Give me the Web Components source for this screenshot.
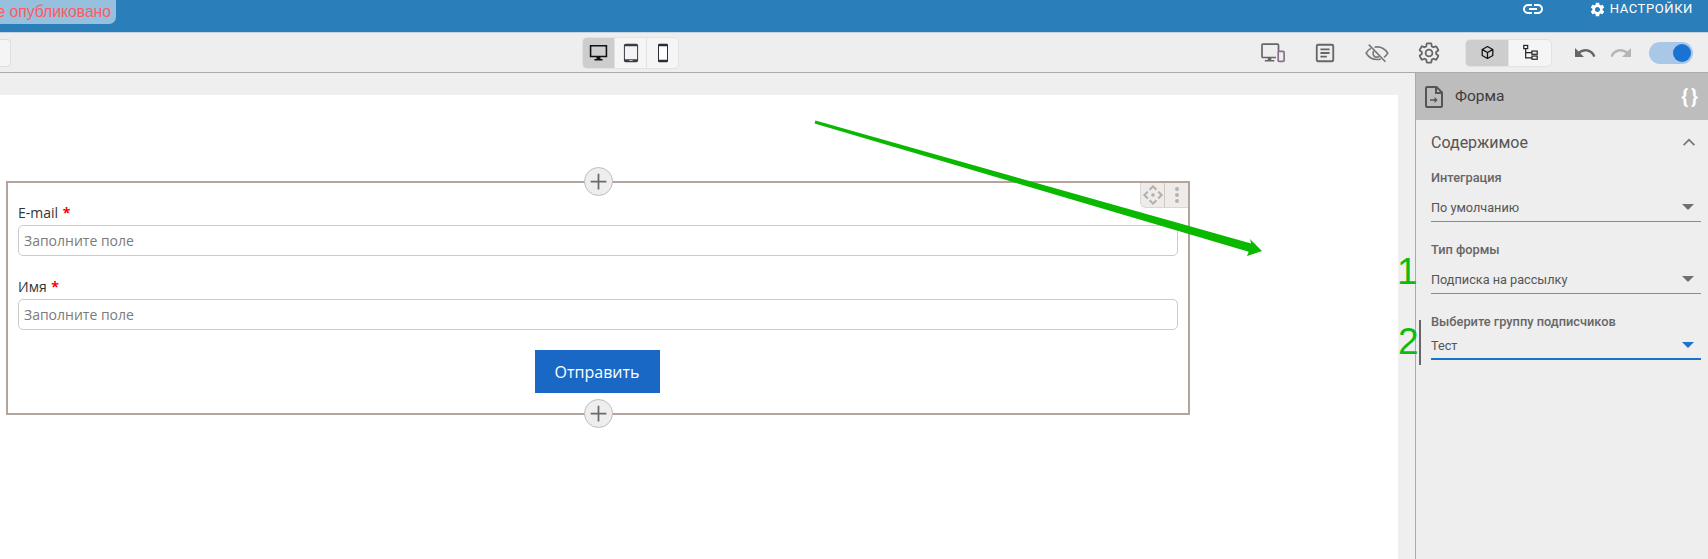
<!DOCTYPE html>
<html lang="ru">
<head>
<meta charset="utf-8">
<title>Форма</title>
<style>
  html, body { margin: 0; height: 100%; overflow: hidden; background: #eee; }
  body { font-family: Roboto, "Liberation Sans", sans-serif; }
</style>
</head>
<body>
<builder-app>
  <top-header slot="header"></top-header>
  <edit-toolbar slot="toolbar"></edit-toolbar>
  <form-canvas slot="canvas">
    <form-field label="E-mail"></form-field>
    <form-field label="Имя"></form-field>
    <submit-button>Отправить</submit-button>
  </form-canvas>
  <side-panel slot="panel">
    <field-select label="Интеграция" value="По умолчанию"></field-select>
    <field-select label="Тип формы" value="Подписка на рассылку"></field-select>
    <field-select label="Выберите группу подписчиков" value="Тест" active></field-select>
  </side-panel>
  <mock-annotations slot="overlay"></mock-annotations>
</builder-app>

<script>
const ICONS = {
  link: '<path fill="currentColor" d="M3.9 12c0-1.71 1.39-3.1 3.1-3.1h4V7H7c-2.76 0-5 2.24-5 5s2.24 5 5 5h4v-1.9H7c-1.71 0-3.1-1.39-3.1-3.1zM8 13h8v-2H8v2zm9-6h-4v1.9h4c1.71 0 3.1 1.39 3.1 3.1s-1.39 3.1-3.1 3.1h-4V17h4c2.76 0 5-2.24 5-5s-2.24-5-5-5z"/>',
  gear: '<path fill="currentColor" d="M19.14 12.94c.04-.3.06-.61.06-.94 0-.32-.02-.64-.07-.94l2.03-1.58c.18-.14.23-.41.12-.61l-1.92-3.32c-.12-.22-.37-.29-.59-.22l-2.39.96c-.5-.38-1.03-.7-1.62-.94l-.36-2.54c-.04-.24-.24-.41-.48-.41h-3.84c-.24 0-.43.17-.47.41l-.36 2.54c-.59.24-1.13.57-1.62.94l-2.39-.96c-.22-.08-.47 0-.59.22L2.74 8.87c-.12.21-.08.47.12.61l2.03 1.58c-.05.3-.09.63-.09.94s.02.64.07.94l-2.03 1.58c-.18.14-.23.41-.12.61l1.92 3.32c.12.22.37.29.59.22l2.39-.96c.5.38 1.03.7 1.62.94l.36 2.54c.05.24.24.41.48.41h3.84c.24 0 .44-.17.47-.41l.36-2.54c.59-.24 1.13-.56 1.62-.94l2.39.96c.22.08.47 0 .59-.22l1.92-3.32c.12-.22.07-.47-.12-.61l-2.01-1.58zM12 15.6c-1.98 0-3.6-1.62-3.6-3.6s1.62-3.6 3.6-3.6 3.6 1.62 3.6 3.6-1.62 3.6-3.6 3.6z"/>',
  gearOutline: '<path fill="none" stroke="currentColor" stroke-width="1.8" d="M19.14 12.94c.04-.3.06-.61.06-.94 0-.32-.02-.64-.07-.94l2.03-1.58c.18-.14.23-.41.12-.61l-1.92-3.32c-.12-.22-.37-.29-.59-.22l-2.39.96c-.5-.38-1.03-.7-1.62-.94l-.36-2.54c-.04-.24-.24-.41-.48-.41h-3.84c-.24 0-.43.17-.47.41l-.36 2.54c-.59.24-1.13.57-1.62.94l-2.39-.96c-.22-.08-.47 0-.59.22L2.74 8.87c-.12.21-.08.47.12.61l2.03 1.58c-.05.3-.09.63-.09.94s.02.64.07.94l-2.03 1.58c-.18.14-.23.41-.12.61l1.92 3.32c.12.22.37.29.59.22l2.39-.96c.5.38 1.03.7 1.62.94l.36 2.54c.05.24.24.41.48.41h3.84c.24 0 .44-.17.47-.41l.36-2.54c.59-.24 1.13-.56 1.62-.94l2.39.96c.22.08.47 0 .59-.22l1.92-3.32c.12-.22.07-.47-.12-.61l-2.01-1.58z"/><circle cx="12" cy="12" r="3.4" fill="none" stroke="currentColor" stroke-width="1.8"/>',
  undo: '<path fill="currentColor" d="M12.5 8c-2.65 0-5.05.99-6.9 2.6L2 7v9h9l-3.62-3.62c1.39-1.16 3.16-1.88 5.12-1.88 3.54 0 6.55 2.31 7.6 5.5l2.37-.78C21.08 11.03 17.15 8 12.5 8z"/>',
  redo: '<path fill="currentColor" d="M18.4 10.6C16.55 8.99 14.15 8 11.5 8c-4.65 0-8.58 3.03-9.96 7.22L3.9 16c1.05-3.19 4.05-5.5 7.6-5.5 1.95 0 3.73.72 5.12 1.88L13 16h9V7l-3.6 3.6z"/>',
  responsive: '<g fill="none" stroke="currentColor" stroke-width="1.7"><path d="M17.5 10.5V4.2q0-1-1-1H2q-1 0-1 1v11.3q0 1 1 1h13"/><rect x="17.2" y="10.4" width="5.9" height="10" rx=".8" stroke="#8a6f93"/></g><path fill="currentColor" d="M6.7 16.5h3.6v2.4h3v1.5H3.8v-1.5h2.9z"/>',
  article: '<path fill="none" stroke="currentColor" stroke-width="2" d="M4.5 3h15q1.5 0 1.5 1.5v15q0 1.5-1.5 1.5h-15Q3 21 3 19.5v-15Q3 3 4.5 3z"/><path fill="currentColor" d="M7 7h10v2H7zM7 11h10v2H7zM7 15h7v2H7z"/>',
  eyeOff: '<g fill="none" stroke="#777" stroke-width="1.6"><path d="M5.8 7.400Q3 9 1.200 12.200q4 6.300 10.800 6.300 2 0 3.800-.6M9.600 6.200q1.200-.3 2.400-.3 6.800 0 10.800 6.300-1.500 2.500-3.800 4.100"/><path d="M14.500 15.300q-1.100.8-2.500.8-3.900 0-3.900-3.900 0-1.200.6-2.200"/><path d="M3.800 3.600l16.600 17.200"/></g>',
  desktop: '<path fill="#111" d="M1 2.5h22v15.5H14.5v2.2h2.6V22H6.9v-1.8h2.6V18H1z"/><path fill="#cfcfcf" d="M3 4.500h18V16H3z"/>',
  tablet: '<rect x="3.500" y="1" width="17" height="22" rx="2" fill="#3c3c44"/><path fill="#f4f4f4" d="M4.700 4h14.600v15.500H4.700z"/><path fill="#eee" d="M10 20.600h4v1h-4z"/>',
  phone: '<rect x="6" y="1" width="12" height="22" rx="1.500" fill="#2c2c34"/><path fill="#fff" d="M7.200 4h9.600v16H7.200z"/>',
  cube: '<path fill="none" stroke="#111" stroke-width="2" stroke-linejoin="round" d="M12 2.500l8.500 4.700v9.600L12 21.500l-8.500-4.700V7.200zM3.800 7.400L12 12l8.200-4.600M12 12v9.300"/>',
  tree: '<g fill="none" stroke="#222" stroke-width="1.700"><rect x="2.500" y="2" width="5.500" height="4.500"/><rect x="14" y="10" width="7.500" height="4.500"/><rect x="14" y="17" width="7.500" height="4.500"/><path d="M5.200 6.500v13.200H14M5.200 12.200H14"/></g>',
  file: '<path fill="none" stroke="currentColor" stroke-width="2" stroke-linejoin="round" d="M5 2h9.500L20 7.500V21q0 1-1 1H5q-1 0-1-1V3q0-1 1-1z"/><path fill="none" stroke="currentColor" stroke-width="2" d="M14 2v6h6"/><path fill="currentColor" d="M8 14.200h4.500V12l3.200 3-3.200 3v-2.200H8z"/>',
  chevron: '<path fill="currentColor" d="M12 8.500l-6 6 1.200 1.200L12 10.900l4.800 4.800L18 14.500z"/>',
  plus: '<path fill="none" stroke="#6a6a6a" stroke-width="2" d="M12 3v18M3 12h18"/>',
  move: '<g fill="#b0b0b0"><path d="M12 1l4.500 4.500-1.600 1.600L12 4.200 9.100 7.100 7.500 5.500zM12 23l4.500-4.500-1.600-1.600-2.900 2.900-2.900-2.900-1.600 1.600zM1 12l4.500-4.500 1.600 1.600L4.200 12l2.900 2.900-1.600 1.600zM23 12l-4.500-4.500-1.600 1.600 2.900 2.900-2.900 2.900 1.600 1.600z"/><circle cx="12" cy="12" r="2"/></g>'
};

function icon(name, size, extra = '') {
  return `<svg width="${size}" height="${size}" viewBox="0 0 24 24" aria-hidden="true" ${extra}>${ICONS[name]}</svg>`;
}

class BuilderApp extends HTMLElement {
  constructor() {
    super();
    this.attachShadow({ mode: 'open' }).innerHTML = `
      <style>
        :host {
          display: grid;
          position: relative;
          width: 1708px;
          height: 559px;
          overflow: hidden;
          grid-template-columns: 1415px 293px;
          grid-template-rows: 33px 40px 1fr;
          grid-template-areas: "header header" "toolbar toolbar" "canvas panel";
        }
        .header { grid-area: header; display: block; }
        .toolbar { grid-area: toolbar; display: block; }
        .canvas { grid-area: canvas; display: block; }
        .panel { grid-area: panel; display: block; }
      </style>
      <div class="header"><slot name="header"></slot></div>
      <div class="toolbar"><slot name="toolbar"></slot></div>
      <div class="canvas"><slot name="canvas"></slot></div>
      <div class="panel"><slot name="panel"></slot></div>
      <slot name="overlay"></slot>
    `;
  }
}

class TopHeader extends HTMLElement {
  constructor() {
    super();
    this.attachShadow({ mode: 'open' }).innerHTML = `
      <style>
        :host {
          display: flex;
          align-items: flex-start;
          height: 33px;
          box-sizing: border-box;
          background: #2a7fba;
          border-bottom: 1px solid #c8d4dc;
          color: #fff;
          overflow: hidden;
        }
        .status {
          width: 116px;
          height: 24px;
          box-sizing: border-box;
          padding-right: 5px;
          display: flex;
          align-items: center;
          justify-content: flex-end;
          white-space: nowrap;
          background: #96c0dd;
          border-bottom-right-radius: 7px;
          color: #ff5a60;
          font: 15.7px/20px "Liberation Sans", Arial, sans-serif;
        }
        .link { margin-left: auto; height: 18px; display: flex; align-items: center; }
        .settings {
          margin-left: 44px;
          margin-right: 15px;
          height: 18px;
          display: flex;
          align-items: center;
          gap: 4px;
          font: 13px/18px Roboto, sans-serif;
          letter-spacing: .6px;
        }
      </style>
      <div class="status">е опубликовано</div>
      <div class="link">${icon('link', 24)}</div>
      <div class="settings">${icon('gear', 17)}<span>НАСТРОЙКИ</span></div>
    `;
  }
}

class EditToolbar extends HTMLElement {
  constructor() {
    super();
    this.attachShadow({ mode: 'open' }).innerHTML = `
      <style>
        :host {
          display: flex;
          align-items: center;
          height: 40px;
          box-sizing: border-box;
          background: #eee;
          border-bottom: 1px solid #ababab;
          color: #666;
        }
        .stub {
          width: 11px;
          height: 28px;
          box-sizing: border-box;
          background: #f5f5f5;
          border: 1px solid #ddd;
          border-left: 0;
          border-radius: 0 4px 4px 0;
        }
        .seg {
          display: flex;
          height: 32px;
          box-sizing: border-box;
          background: #f5f5f5;
          border: 1px solid #e2e2e2;
          border-radius: 5px;
          overflow: hidden;
        }
        .seg div { display: flex; align-items: center; justify-content: center; }
        .seg div + div { border-left: 1px solid #e2e2e2; }
        .seg .on { background: #cdcdcd; }
        .devices { margin-left: 571px; }
        .devices div { width: 31px; }
        .views { height: 28px; margin-left: 10px; }
        .views div { width: 42px; }
        .cell { display: flex; align-items: center; justify-content: center; width: 52px; }
        .tools { margin-left: auto; display: flex; }
        .history { display: flex; margin-left: 15px; }
        .history .cell { width: 36px; }
        .redo { color: #b5b5b5; }
        .toggle {
          margin: 0 15px 0 10px;
          width: 44px;
          height: 22px;
          box-sizing: border-box;
          padding: 2px;
          display: flex;
          justify-content: flex-end;
          background: #a9c8e8;
          border-radius: 11px;
        }
        .toggle i { width: 18px; height: 18px; border-radius: 50%; background: #1a73d4; }
      </style>
      <div class="stub"></div>
      <div class="seg devices">
        <div class="on">${icon('desktop', 19)}</div>
        <div>${icon('tablet', 20)}</div>
        <div>${icon('phone', 20)}</div>
      </div>
      <div class="tools">
        <div class="cell">${icon('responsive', 24)}</div>
        <div class="cell">${icon('article', 22)}</div>
        <div class="cell">${icon('eyeOff', 24)}</div>
        <div class="cell">${icon('gearOutline', 24)}</div>
      </div>
      <div class="seg views">
        <div class="on">${icon('cube', 15)}</div>
        <div>${icon('tree', 17)}</div>
      </div>
      <div class="history">
        <div class="cell">${icon('undo', 24)}</div>
        <div class="cell redo">${icon('redo', 24)}</div>
      </div>
      <div class="toggle"><i></i></div>
    `;
  }
}

class FormCanvas extends HTMLElement {
  constructor() {
    super();
    this.attachShadow({ mode: 'open' }).innerHTML = `
      <style>
        :host {
          display: block;
          height: 100%;
          box-sizing: border-box;
          padding: 22px 17px 0 0;
          background: #efefef;
        }
        .page { height: 100%; background: #fff; padding: 86px 0 0 6px; box-sizing: border-box; }
        .frame {
          position: relative;
          width: 1184px;
          height: 234px;
          box-sizing: border-box;
          border: 2px solid #b3a59c;
          padding: 20px 10px 0;
          display: flex;
          flex-direction: column;
          gap: 21px;
        }
        .add {
          position: absolute;
          left: 576px;
          width: 29px;
          height: 29px;
          box-sizing: border-box;
          display: flex;
          align-items: center;
          justify-content: center;
          border: 1px solid #bdbdbd;
          border-radius: 50%;
          background: #eee;
        }
        .add.top { top: -16px; }
        .add.bottom { bottom: -15px; }
        .grip {
          position: absolute;
          top: 0;
          right: 0;
          display: flex;
          height: 24px;
          background: #efebe9;
          border: solid #ddd6d2;
          border-width: 0 0 1px 1px;
          border-bottom-left-radius: 6px;
        }
        .grip div { width: 23px; display: flex; align-items: center; justify-content: center; }
        .grip div + div { border-left: 1px solid #cfc7c2; }
        .dots { flex-direction: column; gap: 2px; }
        .dots i { width: 4px; height: 4px; border-radius: 50%; background: #b4b4b4; }
      </style>
      <div class="page">
        <div class="frame">
          <div class="add top">${icon('plus', 21)}</div>
          <div class="grip">
            <div>${icon('move', 22)}</div>
            <div class="dots"><i></i><i></i><i></i></div>
          </div>
          <slot></slot>
          <div class="add bottom">${icon('plus', 21)}</div>
        </div>
      </div>
    `;
  }
}

class FormField extends HTMLElement {
  constructor() {
    super();
    this.attachShadow({ mode: 'open' }).innerHTML = `
      <style>
        :host {
          display: block;
          font: 14px/20px "Open Sans", "Liberation Sans", sans-serif;
          color: #333;
        }
        .label { margin-bottom: 2px; }
        .label b { color: #f00; font-weight: 700; margin-left: 1px; }
        .input {
          height: 31px;
          box-sizing: border-box;
          padding: 0 5px;
          border: 1px solid #cbcbcb;
          border-radius: 5px;
          line-height: 29px;
          color: #7b7b7b;
          background: #fff;
        }
      </style>
      <div class="label"><span class="text"></span> <b>*</b></div>
      <div class="input">Заполните поле</div>
    `;
    this.shadowRoot.querySelector('.text').textContent = this.getAttribute('label');
  }
}

class SubmitButton extends HTMLElement {
  constructor() {
    super();
    this.attachShadow({ mode: 'open' }).innerHTML = `
      <style>
        :host {
          display: flex;
          align-self: center;
          align-items: center;
          justify-content: center;
          width: 125px;
          height: 43px;
          margin: -1px 0 0 -2px;
          background: #1968c5;
          color: #fff;
          font: 16px "Open Sans", "Liberation Sans", sans-serif;
        }
      </style>
      <slot></slot>
    `;
  }
}

class SidePanel extends HTMLElement {
  constructor() {
    super();
    this.attachShadow({ mode: 'open' }).innerHTML = `
      <style>
        :host {
          display: block;
          height: 100%;
          box-sizing: border-box;
          background: #eee;
          border-left: 1px solid #ababab;
          color: #555;
        }
        .head {
          display: flex;
          align-items: center;
          height: 47px;
          box-sizing: border-box;
          padding: 0 7px 0 6px;
          background: #bdbdbd;
          color: #555;
        }
        .head span { margin: 0 0 2px 9px; font-size: 15.5px; color: #3c3c3c; }
        .head b { margin-left: auto; color: #fff; font: 700 21px Roboto, sans-serif; letter-spacing: 3px; }
        .section { padding: 0 7px 0 15px; }
        .title {
          display: flex;
          align-items: center;
          justify-content: space-between;
          height: 44px;
          font-size: 16px;
          color: #555;
        }
        .title svg { color: #777; }
        .fields { display: flex; flex-direction: column; gap: 20px; margin-top: 6px; }
      </style>
      <div class="head">
        ${icon('file', 24)}
        <span>Форма</span>
        <b>{}</b>
      </div>
      <div class="section">
        <div class="title"><span>Содержимое</span>${icon('chevron', 24)}</div>
        <div class="fields"><slot></slot></div>
      </div>
    `;
  }
}

class FieldSelect extends HTMLElement {
  constructor() {
    super();
    const active = this.hasAttribute('active');
    this.attachShadow({ mode: 'open' }).innerHTML = `
      <style>
        :host { display: block; color: #555; }
        .label { font: 500 12.8px/16px Roboto, sans-serif; color: #666; height: 16px; }
        .control {
          display: flex;
          align-items: center;
          justify-content: space-between;
          height: ${active ? 30 : 36}px;
          padding-top: ${active ? 4 : 9}px;
          box-sizing: border-box;
          border-bottom: ${active ? '2px solid #1a73c8' : '1px solid #8a8a8a'};
          font: 12.7px/18px Roboto, sans-serif;
        }
        .arrow {
          width: 0;
          height: 0;
          margin: 0 7px 2px 0;
          border: 6px solid transparent;
          border-bottom: 0;
          border-top-color: ${active ? '#1a73c8' : '#6f6f6f'};
        }
      </style>
      <div class="label"></div>
      <div class="control"><span class="value"></span><i class="arrow"></i></div>
    `;
    this.shadowRoot.querySelector('.label').textContent = this.getAttribute('label');
    this.shadowRoot.querySelector('.value').textContent = this.getAttribute('value');
  }
}

// hand-drawn marks on top of the screenshot: free canvas, so absolute is fine here
class MockAnnotations extends HTMLElement {
  constructor() {
    super();
    this.attachShadow({ mode: 'open' }).innerHTML = `
      <style>
        :host { position: absolute; inset: 0; pointer-events: none; }
        svg { position: absolute; left: 0; top: 0; }
        .num {
          position: absolute;
          color: #0cbc0c;
          font: 37px/37px "Liberation Sans", Arial, sans-serif;
        }
        .one { left: 1397px; top: 253px; }
        .two { left: 1398px; top: 323px; }
        .bar { position: absolute; left: 1419px; top: 320px; width: 2px; height: 45px; background: #666; }
      </style>
      <svg width="1708" height="559">
        <polygon fill="#0ab800" points="815.4,120.6 1251.2,243.5 1250,239 1262,251 1247,256 1248.7,251.7 814.6,123.4"/>
      </svg>
      <div class="num one">1</div>
      <div class="num two">2</div>
      <div class="bar"></div>
    `;
  }
}

customElements.define('builder-app', BuilderApp);
customElements.define('top-header', TopHeader);
customElements.define('edit-toolbar', EditToolbar);
customElements.define('form-canvas', FormCanvas);
customElements.define('form-field', FormField);
customElements.define('submit-button', SubmitButton);
customElements.define('side-panel', SidePanel);
customElements.define('field-select', FieldSelect);
customElements.define('mock-annotations', MockAnnotations);
</script>
</body>
</html>
